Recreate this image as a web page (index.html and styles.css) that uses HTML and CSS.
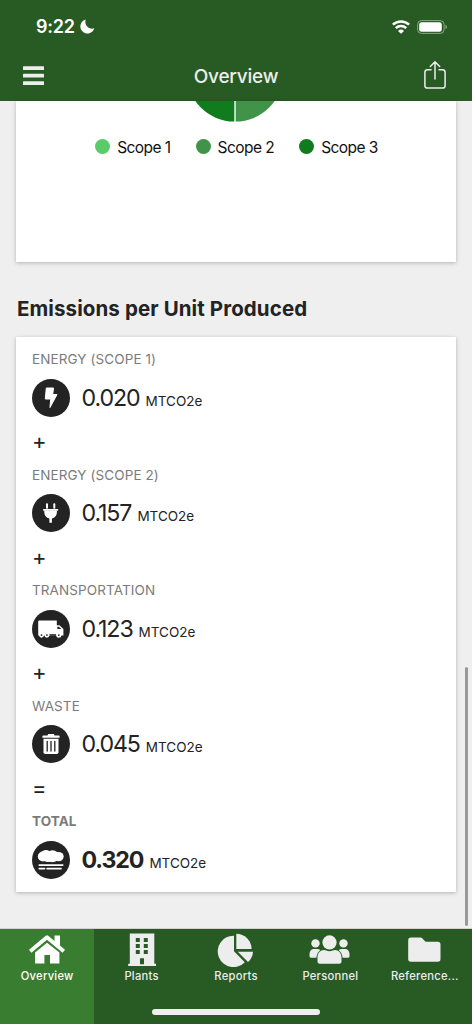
FILE: index.html
```html
<!DOCTYPE html>
<html lang="en">

<head>
  <meta charset="UTF-8">
  <meta name="viewport" content="width=device-width, initial-scale=1.0">
  <title>Overview</title>
  <link rel="stylesheet" href="styles.css">
</head>

<body>
  <header class="header">
    <div class="status-bar">
      <div class="status-left">
        <span class="time">9:22</span>
        <svg class="moon" width="15" height="15" viewBox="0 0 15 15"><path d="M5.700.5A7.100 7.100 0 1 0 14.300 9.300C8.500 11 4 6 5.700.5z"/></svg>
      </div>
      <div class="status-right">
        <svg width="18" height="14" viewBox="0 0 18 14" fill="none" stroke="#fff" stroke-width="2.500"><path d="M.9 4.700A11.600 11.600 0 0 1 17.100 4.700"/><path d="M3.800 8.200A7.500 7.500 0 0 1 14.200 8.200"/><path d="M9 13.700L6 10.900A4.300 4.300 0 0 1 12 10.900z" fill="#fff" stroke="none"/></svg>
        <svg width="31" height="14" viewBox="0 0 31 14"><rect x=".6" y=".6" width="26.500" height="12.800" rx="3.800" fill="none" stroke="#fff" stroke-opacity=".45"/><rect x="2.200" y="2.200" width="22.600" height="9.600" rx="2.400" fill="#fff"/><path d="M28.500 4.800c1.900.8 1.900 3.600 0 4.400z" fill="#fff" fill-opacity=".5"/></svg>
      </div>
    </div>
    <div class="nav-bar">
      <svg width="21" height="20" viewBox="0 0 21 20" fill="#ededed"><rect y=".2" width="21" height="3.800" rx=".6"/><rect y="7.700" width="21" height="3.800" rx=".6"/><rect y="15.200" width="21" height="3.800" rx=".6"/></svg>
      <h1>Overview</h1>
      <svg class="share" width="22" height="28" viewBox="0 0 22 28" fill="none" stroke="#ededed" stroke-width="1.500" stroke-linecap="round" stroke-linejoin="round"><path d="M7 8.800H3.500A2.600 2.600 0 0 0 .9 11.400v13A2.600 2.600 0 0 0 3.500 27h15a2.600 2.600 0 0 0 2.600-2.600v-13a2.600 2.600 0 0 0-2.600-2.600H15M11 18V1.200M6.300 5.500L11 .9l4.700 4.600"/></svg>
    </div>
  </header>

  <main class="content">
    <section class="card chart-card">
      <svg class="pie" width="98" height="21" viewBox="0 0 98 21">
        <path d="M47.300-27V20.500A47.300 47.300 0 0 1 0-27z" fill="#107c1e"/>
        <path d="M48.700-27V20.500A47.300 47.300 0 0 0 96-27z" fill="#41934a"/>
      </svg>
      <div class="legend">
        <span class="legend-item"><i class="dot scope1"></i>Scope 1</span>
        <span class="legend-item"><i class="dot scope2"></i>Scope 2</span>
        <span class="legend-item"><i class="dot scope3"></i>Scope 3</span>
      </div>
    </section>

    <h2>Emissions per Unit Produced</h2>

    <section class="card emissions">
      <div class="item">
        <h3>ENERGY (SCOPE 1)</h3>
        <div class="row">
          <span class="icon"><svg viewBox="0 0 38 38" fill="#fff"><path d="M14.300 9h7.200l-.8 6.500H25L18 28.500l.7-8.500H13.300z" stroke="#fff" stroke-linejoin="round"/></svg></span>
          <span class="value">0.020</span><span class="unit">MTCO2e</span>
        </div>
        <div class="operator">+</div>
      </div>

      <div class="item">
        <h3>ENERGY (SCOPE 2)</h3>
        <div class="row">
          <span class="icon"><svg viewBox="0 0 38 38" fill="#fff"><rect x="14" y="9.200" width="2" height="5.500" rx=".9"/><rect x="21.300" y="9.200" width="2" height="5.500" rx=".9"/><rect x="11" y="15" width="15.300" height="1.700" rx=".7"/><path d="M12.300 16.500h12.600v1.800c0 3.300-2 5.500-5 6.300v4.100h-2.500v-4.100c-3.100-.8-5.100-3-5.100-6.300z"/></svg></span>
          <span class="value">0.157</span><span class="unit">MTCO2e</span>
        </div>
        <div class="operator">+</div>
      </div>

      <div class="item">
        <h3>TRANSPORTATION</h3>
        <div class="row">
          <span class="icon"><svg viewBox="0 0 38 38" fill="#fff"><path d="M7 10.500h17.800v4.700h2.600l4 3.700v6.600H6.200V11.300z"/><path d="M25.300 16.800h1.600l2.300 2.200h-3.900z" fill="#232323"/><path d="M17.500 24.200h6.500v1.500h-6.500z" fill="#232323"/><circle cx="9.500" cy="25.300" r="2.400"/><circle cx="14.900" cy="25.300" r="2.400"/><circle cx="26.800" cy="25.300" r="2.500"/><g fill="#232323"><circle cx="9.500" cy="25.100" r=".9"/><circle cx="14.900" cy="25.100" r=".9"/><circle cx="26.800" cy="25.100" r=".9"/></g></svg></span>
          <span class="value">0.123</span><span class="unit">MTCO2e</span>
        </div>
        <div class="operator">+</div>
      </div>

      <div class="item">
        <h3>WASTE</h3>
        <div class="row">
          <span class="icon"><svg viewBox="0 0 38 38" fill="#fff"><path d="M15.500 10.500l.6-1.400h5.800l.6 1.400h4.300a.8.800 0 0 1 .8.800v1.500H10.400v-1.500a.8.800 0 0 1 .8-.8z"/><path d="M11.500 13.800h15v13.500a1.800 1.800 0 0 1-1.800 1.800H13.300a1.800 1.800 0 0 1-1.800-1.800z"/><path d="M15.200 16.300v9.700M19 16.300v9.700M22.800 16.300v9.700" stroke="#232323" stroke-width="1.300" stroke-linecap="round"/></svg></span>
          <span class="value">0.045</span><span class="unit">MTCO2e</span>
        </div>
        <div class="operator">=</div>
      </div>

      <div class="item total">
        <h3>TOTAL</h3>
        <div class="row">
          <span class="icon"><svg viewBox="0 0 38 38" fill="#fff"><ellipse cx="11" cy="15.500" rx="5.200" ry="5"/><ellipse cx="14" cy="12.800" rx="5" ry="3.700"/><ellipse cx="20.500" cy="15.200" rx="6.500" ry="6"/><ellipse cx="26.500" cy="15.600" rx="5.200" ry="4.700"/><ellipse cx="16" cy="17" rx="5.500" ry="4"/><rect x="6.500" y="23.200" width="25" height="1.800" rx=".8"/><rect x="6.500" y="26.700" width="6.900" height="1.900" rx=".8"/><rect x="14.300" y="26.700" width="15.500" height="1.900" rx=".8"/></svg></span>
          <span class="value">0.320</span><span class="unit">MTCO2e</span>
        </div>
      </div>
    </section>

    <div class="scrollbar"></div>
  </main>

  <nav class="tab-bar">
    <a class="tab active">
      <svg width="38" height="34" viewBox="0 0 38 34"><path d="M2.200 18.300L19 4.300 35.800 18.300" fill="none" stroke="#fff" stroke-width="3.800" stroke-linejoin="round"/><path d="M26.500 2.500h5.500v12l-5.500-4.600zM7.100 19.500L19 9.700l12.400 9.800v11H22v-8.600h-5.600v8.600H7.100z"/></svg>
      <span>Overview</span>
    </a>
    <a class="tab">
      <svg width="38" height="34" viewBox="0 0 38 34"><path fill-rule="evenodd" d="M6.800.5h24.500v30.200H33v2.200H5.200v-2.200h1.600zM12.800 5v4h4V5zm8 0v4h4V5zm-8 6v4h4v-4zm8 0v4h4v-4zm-8 6v4h4v-4zm8 0v4h4v-4zM17 25.200v6h4v-6z"/></svg>
      <span>Plants</span>
    </a>
    <a class="tab">
      <svg width="38" height="34" viewBox="0 0 38 34"><path d="M17 2.700v15.600l10.800 10.900A15.700 15.700 0 1 1 17 2.700z"/><path d="M19.300.8a15.500 15.500 0 0 1 15.300 15.300H19.300z"/><path d="M20.800 18.700H36a15.400 15.400 0 0 1-5 10.400z"/></svg>
      <span>Reports</span>
    </a>
    <a class="tab">
      <svg width="42" height="34" viewBox="0 0 42 34"><circle cx="20.500" cy="9.400" r="7.100"/><circle cx="6.500" cy="10.400" r="4.200"/><circle cx="34.500" cy="10.400" r="4.200"/><path d="M8.500 28.500v-3.700c0-5 3-7.800 6.500-7.800 1.700 0 2.800 1.200 5.500 1.200s3.800-1.200 5.500-1.200c3.500 0 6.500 2.800 6.500 7.800v3.700c0 1.400-.8 2.200-2.200 2.200H10.700c-1.400 0-2.200-.8-2.200-2.200z"/><path d="M7.300 24.700H1.900c-.9 0-1.400-.5-1.400-1.400v-2c0-3.300 1.800-5.300 4.200-5.300h3.600c1.300 0 2.300.4 3 1.200-2.100 1.600-3.400 4.100-4 7.500zM33.700 24.700h5.400c.9 0 1.400-.5 1.400-1.400v-2c0-3.300-1.800-5.300-4.200-5.300h-3.600c-1.300 0-2.300.4-3 1.200 2.100 1.600 3.400 4.100 4 7.500z"/></svg>
      <span>Personnel</span>
    </a>
    <a class="tab">
      <svg width="38" height="34" viewBox="0 0 38 34"><path d="M4.900 4.500h9.500c.8 0 1.500.3 2 .9l3.200 3.300h12.200a2.700 2.700 0 0 1 2.700 2.700V26a2.700 2.700 0 0 1-2.700 2.700H4.900A2.700 2.700 0 0 1 2.200 26V7.200a2.700 2.700 0 0 1 2.700-2.700z"/></svg>
      <span>Reference...</span>
    </a>
    <div class="home-indicator"></div>
  </nav>
</body>

</html>
```
FILE: styles.css
```css
* {
  box-sizing: border-box;
}

body {
  margin: 0;
  width: 472px;
  height: 1024px;
  display: flex;
  flex-direction: column;
  overflow: hidden;
  background-color: #efefef;
  color: #232323;
  font-family: Inter, "Liberation Sans", sans-serif;
}

svg {
  display: block;
  flex: none;
}

h1, h2, h3 {
  margin: 0;
}

/* Header */
.header {
  height: 101px;
  flex: none;
  background-color: #285b23;
  color: #ededed;
}

.status-bar {
  height: 51px;
  padding: 2px 24px 0 36px;
  display: flex;
  justify-content: space-between;
  align-items: center;
}

.status-left {
  display: flex;
  align-items: center;
  gap: 5px;
}

.time {
  color: #fff;
  font-size: 18px;
  font-weight: 600;
  letter-spacing: -0.2px;
}

.moon {
  fill: #fff;
}

.status-right {
  display: flex;
  align-items: center;
  gap: 7px;
}

.nav-bar {
  height: 50px;
  padding: 0 23px;
  display: grid;
  grid-template-columns: 1fr auto 1fr;
  align-items: center;
}

.nav-bar h1 {
  font-size: 19px;
  font-weight: 500;
  letter-spacing: -0.2px;
}

.share {
  margin: -2px 3px 0 0;
  justify-self: end;
}

/* Content */
.content {
  position: relative;
  height: 828px;
  flex: none;
  padding: 0 16px;
  border-bottom: 1px solid #d2d2d2;
}

.card {
  background-color: #fff;
  box-shadow: 0 1px 4px rgba(0, 0, 0, 0.25);
}

.chart-card {
  height: 161px;
}

.pie {
  margin: 0 auto;
}

.legend {
  margin-top: 14px;
  padding-left: 1px;
  display: flex;
  justify-content: center;
  gap: 25px;
  color: #111;
  font-size: 15.5px;
  letter-spacing: -0.55px;
  line-height: 23px;
}

.legend-item {
  display: flex;
  align-items: center;
  gap: 7px;
}

.dot {
  width: 15px;
  height: 15px;
  margin-top: -2px;
  border-radius: 50%;
}

.scope1 {
  background-color: #5acb69;
}

.scope2 {
  background-color: #41934a;
}

.scope3 {
  background-color: #107c1e;
}

h2 {
  height: 75px;
  padding: 33px 0 0 1px;
  font-size: 20.5px;
  letter-spacing: 0.1px;
  line-height: 28px;
  font-weight: 700;
}

.emissions {
  height: 555px;
  padding: 12px 16px;
}

.item {
  height: 115.6px;
}

.item h3 {
  color: #7b7b7b;
  font-size: 13.5px;
  font-weight: 400;
  letter-spacing: 0.1px;
  line-height: 20px;
}

.row {
  height: 38px;
  margin-top: 9.5px;
  display: flex;
  align-items: baseline;
}

.icon {
  width: 38px;
  height: 38px;
  margin-right: 11.5px;
  align-self: center;
  border-radius: 50%;
  background-color: #232323;
}

.value {
  font-size: 23.2px;
  letter-spacing: -1.1px;
  line-height: 38px;
}

.unit {
  margin-left: 6px;
  font-size: 13.5px;
}

.operator {
  margin-top: 9.5px;
  font-size: 22px;
  line-height: 30px;
}

.total h3,
.total .value {
  font-weight: 700;
}

.scrollbar {
  position: absolute;
  top: 566px;
  right: 4px;
  width: 3px;
  height: 259px;
  border-radius: 2px;
  background-color: #999;
}

/* Tab bar */
.tab-bar {
  position: relative;
  height: 95px;
  flex: none;
  display: grid;
  grid-template-columns: repeat(5, 1fr);
  background-color: #285b23;
}

.tab {
  padding-top: 4px;
  display: flex;
  flex-direction: column;
  align-items: center;
  color: #ededed;
  fill: #ededed;
  font-size: 11.2px;
  font-weight: 500;
  letter-spacing: 0.25px;
  line-height: 16px;
}

.tab span {
  margin-top: 1px;
}

.tab.active {
  background-color: #397e30;
  color: #fff;
  fill: #fff;
}

.home-indicator {
  position: absolute;
  left: 152px;
  bottom: 9px;
  width: 168px;
  height: 6px;
  border-radius: 3px;
  background-color: #efefef;
}
```
